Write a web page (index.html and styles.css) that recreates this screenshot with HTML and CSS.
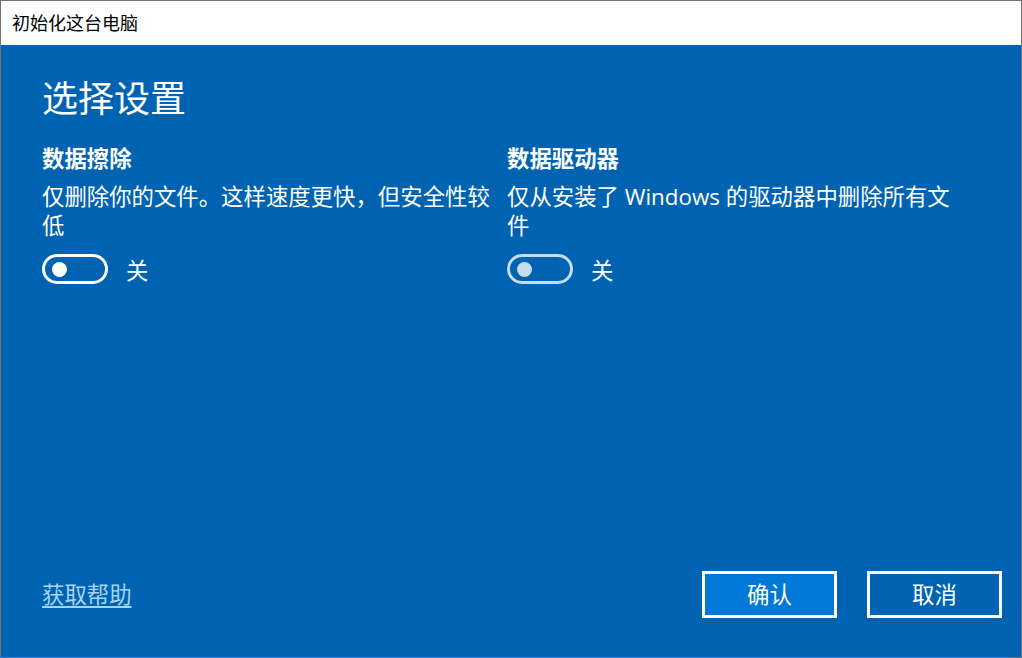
FILE: index.html
```html
<!DOCTYPE html>
<html lang="zh-CN">
<head>
<meta charset="utf-8">
<title>初始化这台电脑</title>
<link rel="stylesheet" href="styles.css">
</head>
<body>
<div class="window">
  <div class="titlebar">初始化这台电脑</div>
  <div class="content">
    <div class="main">
      <h1 class="heading">选择设置</h1>
      <div class="columns">
        <div class="col">
          <div class="label">数据擦除</div>
          <div class="desc">仅删除你的文件。这样速度更快，但安全性较低</div>
          <div class="toggle-row">
            <span class="toggle"><span class="knob"></span></span>
            <span class="state">关</span>
          </div>
        </div>
        <div class="col">
          <div class="label">数据驱动器</div>
          <div class="desc">仅从安装了 Windows 的驱动器中删除所有文件</div>
          <div class="toggle-row">
            <span class="toggle disabled"><span class="knob"></span></span>
            <span class="state">关</span>
          </div>
        </div>
      </div>
    </div>
    <div class="footer">
      <a class="help" href="#">获取帮助</a>
      <div class="buttons">
        <button class="btn primary">确认</button>
        <button class="btn">取消</button>
      </div>
    </div>
  </div>
</div>
</body>
</html>
```
FILE: styles.css
```css
* { box-sizing: border-box; }
html, body {
  margin: 0;
  padding: 0;
  width: 1022px;
  height: 658px;
  overflow: hidden;
}
body {
  font-family: "Open Sans", "Noto Sans CJK SC", sans-serif;
}
.window {
  width: 1022px;
  height: 658px;
  border: 1px solid #747474;
  display: flex;
  flex-direction: column;
  background: #0063b1;
}
.titlebar {
  height: 44px;
  flex: none;
  background: #ffffff;
  color: #000;
  font-size: 18px;
  line-height: 44px;
  padding-left: 11px;
}
.content {
  flex: 1;
  display: flex;
  flex-direction: column;
  color: #fff;
}
.main {
  flex: 1;
  padding: 32px 0 0 41px;
}
.heading {
  margin: 0;
  font-size: 36px;
  font-weight: normal;
  line-height: 44px;
}
.columns {
  display: flex;
  margin-top: 23px;
}
.col {
  width: 465px;
  padding-right: 4px;
}
.label {
  font-size: 22.4px;
  font-weight: bold;
  line-height: 30px;
}
.desc {
  margin-top: 8px;
  font-size: 22.4px;
  line-height: 29px;
}
.toggle-row {
  display: flex;
  align-items: center;
  margin-top: 14px;
  height: 30px;
}
.toggle {
  width: 66px;
  height: 30px;
  border: 3px solid #fff;
  border-radius: 15px;
  display: flex;
  align-items: center;
  padding-left: 7px;
}
.knob {
  width: 15px;
  height: 15px;
  border-radius: 50%;
  background: #fff;
}
.toggle.disabled {
  border-color: #c6dcef;
}
.toggle.disabled .knob {
  background: #c6dcef;
}
.state {
  margin-left: 18px;
  font-size: 22.4px;
}
.footer {
  display: flex;
  align-items: center;
  justify-content: space-between;
  padding: 0 19px 39px 41px;
}
.help {
  color: #a9d3f5;
  font-size: 22.4px;
  line-height: 30px;
  text-decoration: underline;
  text-underline-offset: 3px;
}
.buttons {
  display: flex;
  gap: 30px;
}
.btn {
  width: 135px;
  height: 47px;
  border: 3px solid #fff;
  background: #0063b1;
  color: #fff;
  font-family: inherit;
  font-size: 22.4px;
  line-height: 30px;
  padding: 0;
}
.btn.primary {
  background: #0078d7;
}
```
